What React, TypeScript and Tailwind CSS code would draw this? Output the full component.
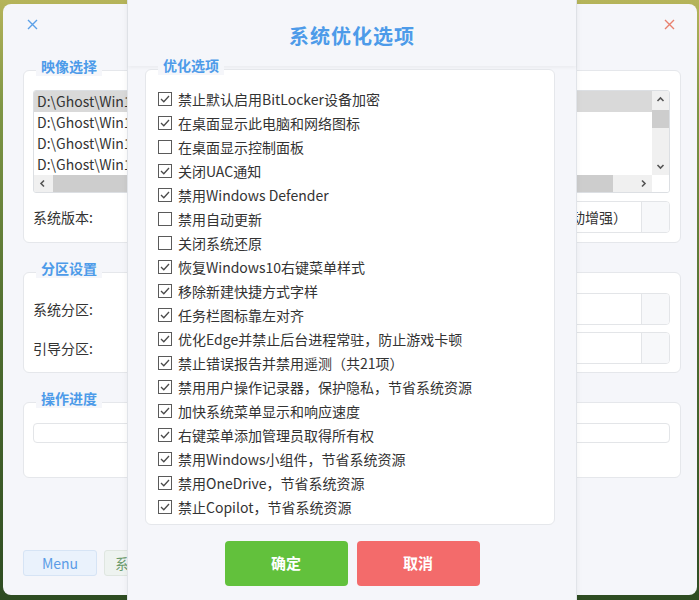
import { ReactNode } from 'react';

const options: { label: string; checked: boolean }[] = [
    { label: '禁止默认启用BitLocker设备加密', checked: true },
    { label: '在桌面显示此电脑和网络图标', checked: true },
    { label: '在桌面显示控制面板', checked: false },
    { label: '关闭UAC通知', checked: true },
    { label: '禁用Windows Defender', checked: true },
    { label: '禁用自动更新', checked: false },
    { label: '关闭系统还原', checked: false },
    { label: '恢复Windows10右键菜单样式', checked: true },
    { label: '移除新建快捷方式字样', checked: true },
    { label: '任务栏图标靠左对齐', checked: true },
    { label: '优化Edge并禁止后台进程常驻，防止游戏卡顿', checked: true },
    { label: '禁止错误报告并禁用遥测（共21项）', checked: true },
    { label: '禁用用户操作记录器，保护隐私，节省系统资源', checked: true },
    { label: '加快系统菜单显示和响应速度', checked: true },
    { label: '右键菜单添加管理员取得所有权', checked: true },
    { label: '禁用Windows小组件，节省系统资源', checked: true },
    { label: '禁用OneDrive，节省系统资源', checked: true },
    { label: '禁止Copilot，节省系统资源', checked: true },
];

// only the start of each path shows beside the dialog
const images = ['D:\\Ghost\\Win1', 'D:\\Ghost\\Win1', 'D:\\Ghost\\Win1', 'D:\\Ghost\\Win1'];

function CloseIcon({ color }: { color: string }) {
    return (
        <svg width="11" height="11" viewBox="0 0 11 11">
            <path d="M1 1L10 10M10 1L1 10" stroke={color} strokeWidth="1.4" fill="none" />
        </svg>
    );
}

function Chevron({ dir }: { dir: 'up' | 'down' | 'left' | 'right' }) {
    const d = {
        up: 'M1.5 6L4.5 3L7.5 6',
        down: 'M1.5 3L4.5 6L7.5 3',
        left: 'M6 1.5L3 4.5L6 7.5',
        right: 'M3 1.5L6 4.5L3 7.5',
    }[dir];
    return (
        <svg width="9" height="9" viewBox="0 0 9 9">
            <path d={d} stroke="#555" strokeWidth="1.6" fill="none" />
        </svg>
    );
}

function Group({ title, className, children }: { title: string; className?: string; children: ReactNode }) {
    return (
        <div className={`relative rounded-[6px] border border-[#e5e7eb] bg-white ${className ?? ''}`}>
            {/* legend over the top border */}
            <span className="absolute -top-[15px] left-[12px] bg-[#f5f6fa] px-[5px] text-[14px] font-bold leading-[20px] text-[#4d9be9]">
                {title}
            </span>
            {children}
        </div>
    );
}

function Combo({ text }: { text?: string }) {
    return (
        <div className="ml-auto flex h-[32px] w-[520px] overflow-hidden rounded-[4px] border border-[#e3e5e8] bg-white">
            <div className="flex flex-1 items-center justify-end pr-[14px] text-[14px] text-[#333]">{text}</div>
            <div className="w-[28px] border-l border-[#e3e5e8] bg-[#f7f8fa]" />
        </div>
    );
}

function CheckBox({ checked }: { checked: boolean }) {
    return (
        <svg width="14" height="14" viewBox="0 0 14 14" className="shrink-0">
            <rect x="0.5" y="0.5" width="13" height="13" fill="#fff" stroke="#5a5a5a" />
            {checked && <path d="M3 7L5.8 9.8L11 4" stroke="#4a4a4a" strokeWidth="1.3" fill="none" />}
        </svg>
    );
}

export default function App() {
    return (
        <div className="relative h-[600px] w-[699px] overflow-hidden bg-[linear-gradient(180deg,#b6b45a_0%,#7f9645_18%,#4f6d2f_55%,#2e4c22_100%)] pb-[5px] pl-[3px] pr-[2px] pt-[4px] font-['Noto_Sans_CJK_SC',sans-serif]">
            {/* Main window behind the dialog */}
            <div className="flex h-full flex-col rounded-[8px] bg-[#f5f6fa]">
                <div className="flex h-[66px] items-start justify-between pl-[24px] pr-[22px] pt-[15px]">
                    <CloseIcon color="#5aa0e8" />
                    <CloseIcon color="#e8806e" />
                </div>

                <div className="flex flex-col pl-[20px] pr-[16px]">
                    <Group title="映像选择" className="pb-[9px] pl-[9px] pr-[10px] pt-[19px]">
                        <div className="flex overflow-hidden rounded-[3px] border border-[#dcdfe3]">
                            <div className="flex min-w-0 flex-1 flex-col">
                                {images.map((img, i) => (
                                    <div
                                        key={i}
                                        className={`flex h-[21px] items-center whitespace-nowrap pl-[3px] text-[14px] text-[#333] ${i === 0 ? 'bg-[#d9d9d9]' : ''}`}
                                    >
                                        {img}
                                    </div>
                                ))}
                                <div className="flex h-[17px] items-center bg-[#f0f0f0]">
                                    <div className="flex w-[17px] items-center justify-center">
                                        <Chevron dir="left" />
                                    </div>
                                    <div className="ml-[2px] h-[17px] w-[560px] bg-[#cdcdcd]" />
                                    <div className="flex-1" />
                                    <div className="flex w-[17px] items-center justify-center">
                                        <Chevron dir="right" />
                                    </div>
                                </div>
                            </div>
                            <div className="flex w-[17px] flex-col">
                                <div className="flex h-[84px] flex-col bg-[#f0f0f0]">
                                    <div className="flex h-[17px] items-center justify-center">
                                        <Chevron dir="up" />
                                    </div>
                                    <div className="mt-[2px] h-[18px] bg-[#cdcdcd]" />
                                    <div className="flex-1" />
                                    <div className="flex h-[17px] items-center justify-center">
                                        <Chevron dir="down" />
                                    </div>
                                </div>
                                <div className="h-[17px] bg-white" />
                            </div>
                        </div>
                        <div className="mt-[8px] flex items-center">
                            <span className="text-[14px] text-[#333]">系统版本:</span>
                            <Combo text="动增强）" />
                        </div>
                    </Group>

                    <Group title="分区设置" className="mt-[29px] flex flex-col gap-[7px] pb-[8px] pl-[9px] pr-[10px] pt-[20px]">
                        <div className="flex items-center">
                            <span className="text-[14px] text-[#333]">系统分区:</span>
                            <Combo />
                        </div>
                        <div className="flex items-center">
                            <span className="text-[14px] text-[#333]">引导分区:</span>
                            <Combo />
                        </div>
                    </Group>

                    <Group title="操作进度" className="mt-[29px] pb-[34px] pl-[9px] pr-[10px] pt-[20px]">
                        <div className="h-[20px] rounded-[4px] border border-[#e3e5e8] bg-white" />
                    </Group>

                    <div className="mt-[72px] flex gap-[7px]">
                        <button className="h-[26px] w-[74px] rounded-[3px] border border-[#d6e4f5] bg-[#eaf2fc] text-[14px] text-[#5b9ce6]">
                            Menu
                        </button>
                        <button className="h-[26px] w-[74px] rounded-[3px] border border-[#dfe6e0] bg-[#eef3f0] pl-[10px] text-left text-[14px] text-[#6b9a6b]">
                            系
                        </button>
                    </div>
                </div>
            </div>

            {/* Modal dialog */}
            <div className="absolute left-[127px] top-0 flex h-[620px] w-[450px] flex-col border-x border-[#e1e4e9] bg-[#f5f6fa] shadow-[0_0_6px_rgba(0,0,0,0.06)]">
                <div className="flex h-[66px] items-center justify-center pt-[6px] shadow-[0_2px_3px_rgba(0,0,0,0.04)]">
                    <h1 className="text-[20px] font-bold tracking-[1px] text-[#4d9be9]">系统优化选项</h1>
                </div>

                <Group title="优化选项" className="ml-[17px] mr-[21px] mt-[3px] pb-[5px] pl-[12px] pt-[17px]">
                    {options.map((o) => (
                        <div key={o.label} className="flex h-[24px] items-center gap-[6px] text-[14px] text-[#333]">
                            <CheckBox checked={o.checked} />
                            <span>{o.label}</span>
                        </div>
                    ))}
                </Group>

                <div className="mt-[16px] flex justify-center gap-[9px]">
                    <button className="h-[45px] w-[123px] rounded-[4px] bg-[#62c13c] text-[15px] font-bold text-white">
                        确定
                    </button>
                    <button className="h-[45px] w-[123px] rounded-[4px] bg-[#f36b6b] text-[15px] font-bold text-white">
                        取消
                    </button>
                </div>
            </div>
        </div>
    );
}
